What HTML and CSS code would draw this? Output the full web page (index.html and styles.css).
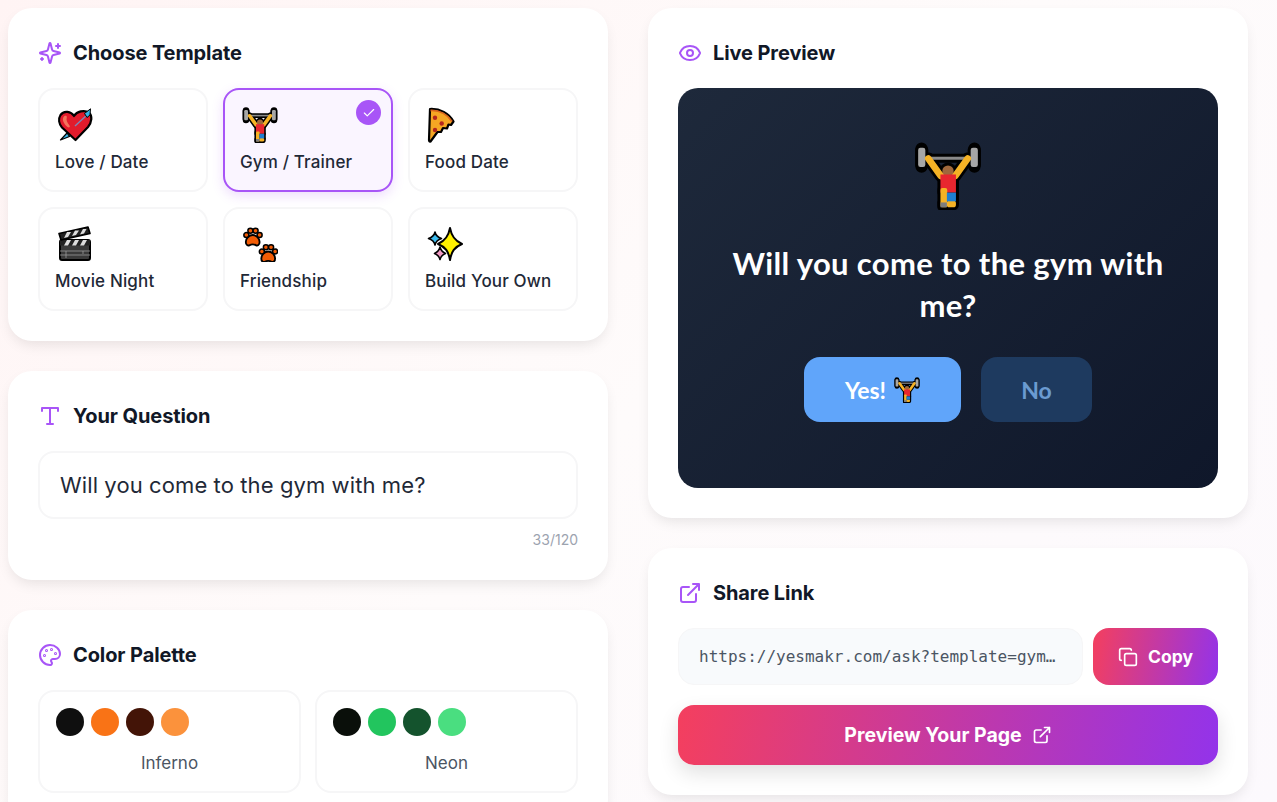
FILE: index.html
```html
<!DOCTYPE html>
<html lang="en">
<head>
  <meta charset="UTF-8" />
  <meta name="viewport" content="width=device-width, initial-scale=1.0"/>
  <title>YesMakr</title>
  <link rel="stylesheet" href="styles.css">
</head>
<body>

  <!-- emoji drawings, reused with <use> -->
  <svg class="sprite" xmlns="http://www.w3.org/2000/svg">
    <defs>
      <g id="lifter-shape" stroke-linecap="round" stroke-linejoin="round">
        <rect x="2.2" y="3" width="3.8" height="10.2" rx="1.2" fill="#a6a6a6"/>
        <rect x="30" y="3" width="3.8" height="10.2" rx="1.2" fill="#a6a6a6"/>
        <rect x="6" y="7.8" width="24" height="1.6" fill="#8a8a8a"/>
        <path d="M7.6 8.8 14.2 18H21.8L28.4 8.8" fill="none" stroke="#f5b225" stroke-width="3.600"/>
        <circle cx="18" cy="15.400" r="3" fill="#a0683c"/>
        <rect x="14" y="17.200" width="8.200" height="9.600" fill="#e8262f"/>
        <rect x="14" y="24.400" width="3.600" height="10.200" rx="1" fill="#f5b225"/>
        <rect x="17.400" y="31" width="4.800" height="3.600" rx="1.400" fill="#f5b225"/>
        <rect x="17.400" y="26.800" width="4.800" height="4.600" fill="#1f7fd1"/>
        <rect x="14" y="32" width="3.400" height="2.600" fill="#7d7d7d"/>
      </g>
      <symbol id="e-lifter" viewBox="0 0 36 36">
        <use href="#lifter-shape" stroke="#000" stroke-width="3.200"/>
        <path d="M7.6 8.8 14.2 18M28.4 8.8 21.8 18M4 3.500V13M32 3.500V13" fill="none" stroke="#000" stroke-width="6.500" stroke-linecap="round"/>
        <use href="#lifter-shape"/>
      </symbol>
      <symbol id="e-heart" viewBox="0 0 36 36">
        <path d="M17 9C14 4.500 7 3 3.500 8 1 12 2 17 5 20.500L18.500 33 31 20C35 15 35.500 9 32 5.500 27 2.500 20 4.500 17 9z" fill="#e21b2c" stroke="#000" stroke-width="2.200" stroke-linejoin="round"/>
        <path d="M6.500 10c-1.500 3 0 6.500 4 10 1.500 1.200 3 0 2-1.500C10 15.500 9 13 9.800 10.500 10.300 8.500 7.800 8 6.500 10z" fill="#f2745c"/>
        <path d="M18 19 31 7" stroke="#7d86b8" stroke-width="1.400"/>
        <path d="M27.500 6.500 33.500 1.800l-.5 6.200-3 2.500z" fill="#36b5e8" stroke="#000" stroke-width="1"/>
        <path d="M3.500 33 10 26l2.500 3.500z" fill="#36b5e8" stroke="#000" stroke-width="1.200" stroke-linejoin="round"/>
      </symbol>
      <symbol id="e-pizza" viewBox="0 0 36 36">
        <path d="M3 2C13 1.500 22 6 26.500 14.500L24 18 21.500 17.500 20 21.500 16 21 14 25 10.500 25 3.500 34.500C2.500 35 2 34 2 33z" fill="#f5a623" stroke="#000" stroke-width="2.200" stroke-linejoin="round"/>
        <path d="M3.500 3.500C12.500 3 20.500 7.500 25 14.500" fill="none" stroke="#d9641e" stroke-width="1.800"/>
        <circle cx="8" cy="10.700" r="2.200" fill="#b3261e"/>
        <circle cx="14.700" cy="16.500" r="2.200" fill="#b3261e"/>
        <circle cx="8" cy="23" r="2.200" fill="#b3261e"/>
      </symbol>
      <symbol id="e-clapper" viewBox="0 0 36 36">
        <rect x="3" y="14" width="30" height="20" rx="2" fill="#3a3a3a" stroke="#000" stroke-width="2"/>
        <path d="M3 14h30v5.500H3z" fill="#222"/>
        <path d="M7 19.500 10 14h4l-3 5.500zM15 19.500 18 14h4l-3 5.500zM23 19.500 26 14h4l-3 5.500z" fill="#ddd"/>
        <path d="M3 25h30M3 29h30M9 25v7M26 25v3" stroke="#999" stroke-width=".8"/>
        <path d="M2 7.500 31 1l2 6.500L4 14z" fill="#222" stroke="#000" stroke-width="1.600" stroke-linejoin="round"/>
        <path d="M7 12 10 6h4l-3 5zM15 10 18 4.500h4l-3 4.500zM23 8.500 26 3h3.500L27 7.500z" fill="#ddd"/>
      </symbol>
      <g id="paw">
        <path d="M2 12.500c0-3 3-6 6-6s6 3 6 6c0 3-2 3.500-3 3-1.500-.8-4.500-.8-6 0-1 .5-3 0-3-3z" fill="#f25c05" stroke="#000" stroke-width="1.600" stroke-linejoin="round"/>
        <circle cx="2.500" cy="6.500" r="2.200" fill="#f25c05" stroke="#000" stroke-width="1.300"/>
        <circle cx="6" cy="2.800" r="2.200" fill="#f25c05" stroke="#000" stroke-width="1.300"/>
        <circle cx="10.500" cy="2.800" r="2.200" fill="#f25c05" stroke="#000" stroke-width="1.300"/>
        <circle cx="14" cy="6.500" r="2.200" fill="#f25c05" stroke="#000" stroke-width="1.300"/>
      </g>
      <symbol id="e-paws" viewBox="0 0 36 36">
        <use href="#paw" transform="translate(1.500 1.500) scale(1.150)"/>
        <use href="#paw" transform="translate(17 18) scale(1.150)"/>
      </symbol>
      <symbol id="e-sparkles" viewBox="0 0 36 36">
        <path d="M23 2c1.500 8 4.500 12.500 12 16-7.500 3-10.500 7.500-12 16-1.500-8.500-4.500-13-12-16 7.500-3.500 10.500-8 12-16z" fill="#fff000" stroke="#000" stroke-width="2" stroke-linejoin="round"/>
        <path d="M8 6c.7 3.500 2 5 6.500 6.500-4.500 1.500-5.800 3-6.500 6.500-.7-3.500-2-5-6.500-6.500 4.500-1.500 5.800-3 6.500-6.500z" fill="#3dbdf0" stroke="#000" stroke-width="1.600" stroke-linejoin="round"/>
        <path d="M13 21c.6 3 1.700 4.700 5.500 6.500-3.800 1.500-4.900 3-5.500 6-.6-3-1.700-4.500-5.500-6 3.800-1.800 4.900-3.500 5.500-6.500z" fill="#f29ac4" stroke="#000" stroke-width="1.600" stroke-linejoin="round"/>
      </symbol>
    </defs>
  </svg>

  <div class="page">

    <div class="column">

      <section class="card">
        <h2 class="card-title">
          <svg class="icon" viewBox="0 0 24 24"><path d="M9.937 15.5A2 2 0 0 0 8.500 14.063l-6.135-1.582a.5.5 0 0 1 0-.962L8.500 9.936A2 2 0 0 0 9.937 8.500l1.582-6.135a.5.500 0 0 1 .963 0L14.063 8.500A2 2 0 0 0 15.500 9.937l6.135 1.581a.5.5 0 0 1 0 .964L15.500 14.063a2 2 0 0 0-1.437 1.437l-1.582 6.135a.5.5 0 0 1-.963 0z"/><path d="M20 3v4M22 5h-4M4 17v2M5 18H3"/></svg>
          Choose Template
        </h2>
        <div class="template-grid">
          <div class="template">
            <svg class="emoji"><use href="#e-heart"/></svg>
            <span class="template-name">Love / Date</span>
          </div>
          <div class="template selected">
            <span class="check"><svg viewBox="0 0 24 24"><path d="M20 6 9 17l-5-5"/></svg></span>
            <svg class="emoji"><use href="#e-lifter"/></svg>
            <span class="template-name">Gym / Trainer</span>
          </div>
          <div class="template">
            <svg class="emoji"><use href="#e-pizza"/></svg>
            <span class="template-name">Food Date</span>
          </div>
          <div class="template">
            <svg class="emoji"><use href="#e-clapper"/></svg>
            <span class="template-name">Movie Night</span>
          </div>
          <div class="template">
            <svg class="emoji"><use href="#e-paws"/></svg>
            <span class="template-name">Friendship</span>
          </div>
          <div class="template">
            <svg class="emoji"><use href="#e-sparkles"/></svg>
            <span class="template-name">Build Your Own</span>
          </div>
        </div>
      </section>

      <section class="card">
        <h2 class="card-title">
          <svg class="icon" viewBox="0 0 24 24"><path d="M4 7V4h16v3M9 20h6M12 4v16"/></svg>
          Your Question
        </h2>
        <input class="question-input" type="text" value="Will you come to the gym with me?" />
        <div class="counter">33/120</div>
      </section>

      <section class="card">
        <h2 class="card-title">
          <svg class="icon" viewBox="0 0 24 24"><path d="M12 22a1 1 0 0 1 0-20 10 9 0 0 1 10 9 5 5 0 0 1-5 5h-2.250a1.750 1.750 0 0 0-1.400 2.800l.3.4a1.750 1.750 0 0 1-1.400 2.800z"/><circle cx="13.500" cy="6.500" r=".5"/><circle cx="17.500" cy="10.500" r=".5"/><circle cx="6.500" cy="12.500" r=".5"/><circle cx="8.500" cy="7.500" r=".5"/></svg>
          Color Palette
        </h2>
        <div class="palette-grid">
          <div class="palette">
            <div class="swatches">
              <span class="swatch inferno-1"></span>
              <span class="swatch inferno-2"></span>
              <span class="swatch inferno-3"></span>
              <span class="swatch inferno-4"></span>
            </div>
            <div class="palette-name">Inferno</div>
          </div>
          <div class="palette">
            <div class="swatches">
              <span class="swatch neon-1"></span>
              <span class="swatch neon-2"></span>
              <span class="swatch neon-3"></span>
              <span class="swatch neon-4"></span>
            </div>
            <div class="palette-name">Neon</div>
          </div>
        </div>
      </section>

    </div>

    <div class="column">

      <section class="card">
        <h2 class="card-title">
          <svg class="icon" viewBox="0 0 24 24"><path d="M2.062 12.348a1 1 0 0 1 0-.696 10.750 10.750 0 0 1 19.876 0 1 1 0 0 1 0 .696 10.750 10.750 0 0 1-19.876 0"/><circle cx="12" cy="12" r="3"/></svg>
          Live Preview
        </h2>
        <div class="preview">
          <svg class="preview-emoji"><use href="#e-lifter"/></svg>
          <p class="preview-question">Will you come to the gym with me?</p>
          <div class="preview-buttons">
            <button class="btn-yes">Yes! <svg class="btn-emoji"><use href="#e-lifter"/></svg></button>
            <button class="btn-no">No</button>
          </div>
        </div>
      </section>

      <section class="card">
        <h2 class="card-title">
          <svg class="icon" viewBox="0 0 24 24"><path d="M15 3h6v6M10 14 21 3M18 13v6a2 2 0 0 1-2 2H5a2 2 0 0 1-2-2V8a2 2 0 0 1 2-2h6"/></svg>
          Share Link
        </h2>
        <div class="share-row">
          <input class="share-input" type="text" readonly value="https://yesmakr.com/ask?template=gym&amp;question=Will+you+come+to+the+gym" />
          <button class="btn-copy">
            <svg viewBox="0 0 24 24"><rect x="8" y="8" width="14" height="14" rx="2"/><path d="M4 16c-1.100 0-2-.9-2-2V4c0-1.100.9-2 2-2h10c1.100 0 2 .9 2 2"/></svg>
            Copy
          </button>
        </div>
        <button class="btn-preview">
          Preview Your Page
          <svg viewBox="0 0 24 24"><path d="M15 3h6v6M10 14 21 3M18 13v6a2 2 0 0 1-2 2H5a2 2 0 0 1-2-2V8a2 2 0 0 1 2-2h6"/></svg>
        </button>
      </section>

    </div>

  </div>

</body>
</html>
```

FILE: styles.css
```css
:root {
  --purple: #a855f7;
  --ink: #111827;
  --label: #1f2937;
  --line: #f6f6f7;
  --gradient: linear-gradient(100deg, #f43f5e, #9333ea);
}

* {
  box-sizing: border-box;
}

html, body {
  height: 100%;
  overflow: hidden;
}

body {
  margin: 0;
  background: linear-gradient(135deg, #fff4f4 0%, #fefbfb 50%, #fcf9fd 100%);
  color: var(--ink);
  font-family: Inter, "Noto Sans", sans-serif;
}

.sprite {
  position: absolute;
  width: 0;
  height: 0;
}

.page {
  display: grid;
  grid-template-columns: 600px 600px;
  gap: 40px;
  padding: 8px 0 0 8px;
}

.column {
  display: flex;
  flex-direction: column;
  gap: 30px;
}

.card {
  background: #fff;
  border-radius: 24px;
  padding: 30px;
  box-shadow: 0 6px 14px -3px rgba(0,0,0,0.10);
}

.card-title {
  display: flex;
  align-items: center;
  gap: 11px;
  height: 30px;
  margin: 0 0 20px;
  font-size: 20px;
  font-weight: 700;
  letter-spacing: -0.1px;
}

.icon {
  width: 24px;
  height: 24px;
  fill: none;
  stroke: var(--purple);
  stroke-width: 2;
  stroke-linecap: round;
  stroke-linejoin: round;
}

.template-grid {
  display: grid;
  grid-template-columns: repeat(3, 1fr);
  gap: 15px;
}

.template {
  position: relative;
  display: flex;
  flex-direction: column;
  align-items: flex-start;
  gap: 9px;
  height: 104px;
  padding: 17px 15px;
  border: 2px solid var(--line);
  border-radius: 16px;
  background: #fff;
}

.template.selected {
  border-color: var(--purple);
  background: #faf5ff;
  box-shadow: 0 4px 12px rgba(168,85,247,0.2);
}

.emoji {
  width: 36px;
  height: 36px;
  margin-left: 1.5px;
}

.template-name {
  font-size: 17px;
  font-weight: 500;
  letter-spacing: 0.15px;
  color: var(--label);
}

.check {
  position: absolute;
  top: 10px;
  right: 10px;
  display: flex;
  align-items: center;
  justify-content: center;
  width: 25px;
  height: 25px;
  border-radius: 50%;
  background: var(--purple);
}

.check svg {
  width: 14px;
  height: 14px;
  fill: none;
  stroke: #fff;
  stroke-width: 2;
  stroke-linecap: round;
  stroke-linejoin: round;
}

.question-input {
  display: block;
  width: 100%;
  height: 68px;
  padding: 0 20px;
  border: 2px solid var(--line);
  border-radius: 16px;
  background: #fff;
  color: #1f2937;
  font-family: inherit;
  font-size: 22px;
  letter-spacing: 0.1px;
  outline: none;
}

.counter {
  margin: 12px 0 2px;
  text-align: right;
  font-size: 14px;
  color: #9ca3af;
}

.palette-grid {
  display: grid;
  grid-template-columns: 1fr 1fr;
  gap: 14px;
}

.palette {
  padding: 16px 16px 18px;
  border: 2px solid var(--line);
  border-radius: 16px;
}

.swatches {
  display: flex;
  gap: 7px;
  margin-bottom: 17px;
}

.swatch {
  width: 28px;
  height: 28px;
  border-radius: 50%;
}

.inferno-1 { background: #0f0f0f; }
.inferno-2 { background: #f97316; }
.inferno-3 { background: #431407; }
.inferno-4 { background: #fb923c; }
.neon-1 { background: #0a0f0a; }
.neon-2 { background: #22c55e; }
.neon-3 { background: #14532d; }
.neon-4 { background: #4ade80; }

.palette-name {
  text-align: center;
  font-size: 17px;
  color: #4b5563;
}

.preview {
  display: flex;
  flex-direction: column;
  align-items: center;
  height: 400px;
  padding: 54px 40px 0;
  border-radius: 20px;
  background: linear-gradient(135deg, #1e293b, #0f172a);
  font-family: Lato, Inter, sans-serif;
}

.preview-emoji {
  width: 68px;
  height: 68px;
}

.preview-question {
  margin: 32px 0 31px;
  text-align: center;
  color: #fff;
  font-size: 31px;
  font-weight: 700;
  letter-spacing: 0.35px;
  line-height: 42px;
}

.preview-buttons {
  display: flex;
  gap: 20px;
}

.btn-yes,
.btn-no {
  height: 65px;
  border: none;
  border-radius: 16px;
  font-family: inherit;
  font-size: 23px;
  font-weight: 700;
}

.btn-yes {
  display: flex;
  align-items: center;
  justify-content: center;
  gap: 8px;
  width: 157px;
  background: #60a5fa;
  color: #fff;
}

.btn-emoji {
  width: 26px;
  height: 26px;
}

.btn-no {
  width: 111px;
  background: #1e3a5f;
  color: #6b9bd1;
}

.share-row {
  display: flex;
  gap: 10px;
  margin-bottom: 20px;
}

.share-input {
  flex: 1;
  min-width: 0;
  height: 57px;
  padding: 0 20px;
  border: 1px solid var(--line);
  border-radius: 16px;
  background: #f8fafc;
  color: #4b5563;
  font-family: "DejaVu Sans Mono", monospace;
  font-size: 16px;
  text-overflow: ellipsis;
  outline: none;
}

.btn-copy {
  display: flex;
  align-items: center;
  justify-content: center;
  gap: 10px;
  width: 125px;
  height: 57px;
  border: none;
  border-radius: 16px;
  background: var(--gradient);
  color: #fff;
  font-family: inherit;
  font-size: 17.5px;
  font-weight: 700;
}

.btn-copy svg,
.btn-preview svg {
  width: 20px;
  height: 20px;
  fill: none;
  stroke: #fff;
  stroke-width: 2;
  stroke-linecap: round;
  stroke-linejoin: round;
}

.btn-preview {
  display: flex;
  align-items: center;
  justify-content: center;
  gap: 10px;
  width: 100%;
  height: 60px;
  border: none;
  border-radius: 16px;
  background: var(--gradient);
  box-shadow: 0 8px 20px rgba(0,0,0,0.12);
  color: #fff;
  font-family: inherit;
  font-size: 19.5px;
  font-weight: 700;
}
```
